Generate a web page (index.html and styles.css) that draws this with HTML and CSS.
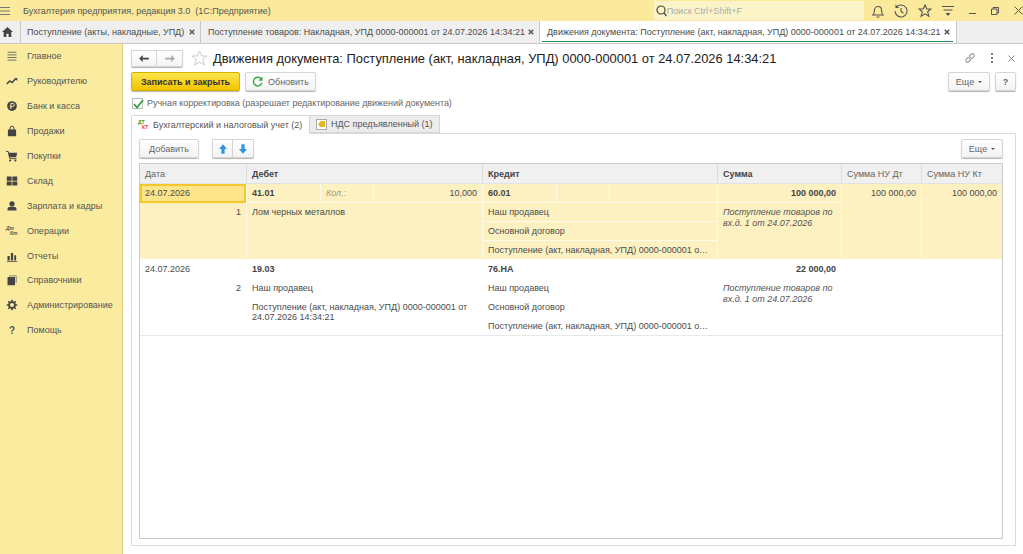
FILE: index.html
```html
<!DOCTYPE html>
<html lang="ru">
<head>
  <meta charset="UTF-8">
  <title>Движения документа</title>
  <link rel="stylesheet" href="styles.css">
</head>
<body>
  <header class="topbar">
    <svg class="burger" width="10" height="8" viewBox="0 0 10 8"><path d="M0 .5h10M0 4h10M0 7.500h10" stroke="#777" fill="none"/></svg>
    <div class="app-title">Бухгалтерия предприятия, редакция 3.0&nbsp; (1С:Предприятие)</div>
    <div class="search">
      <svg width="11" height="12" viewBox="0 0 11 12"><circle cx="5" cy="5" r="4" fill="none" stroke="#444" stroke-width="1.2"/><path d="M8 8l2.5 3" stroke="#444" stroke-width="1.2"/></svg>
      <span>Поиск Ctrl+Shift+F</span>
    </div>
    <div class="top-icons">
      <svg width="14" height="14" viewBox="0 0 14 14"><path d="M2 11c1-1 1.500-2 1.500-5a3.500 3.500 0 0 1 7 0c0 3 .5 4 1.500 5zM5.500 13h3" fill="none" stroke="#555" stroke-width="1.100"/></svg>
      <svg width="14" height="14" viewBox="0 0 14 14"><path d="M2.500 3A6 6 0 1 1 1 7M2 .8V3.500h2.700M7 4v3.500l2.500 1.500" fill="none" stroke="#555" stroke-width="1.100"/></svg>
      <svg width="14" height="14" viewBox="0 0 14 14"><path d="M7 1l1.800 4h4.200l-3.300 2.800 1.200 4.400L7 9.800l-3.900 2.400 1.200-4.400L1 5h4.200z" fill="none" stroke="#555" stroke-width="1.100"/></svg>
      <svg width="14" height="14" viewBox="0 0 14 14"><path d="M1 2.500h12M2.500 6h9" fill="none" stroke="#555"/><path d="M4.500 9h5L7 12z" fill="#555"/></svg>
    </div>
    <div class="win-btns">
      <span class="win-min"></span>
      <svg width="8" height="8" viewBox="0 0 8 8"><path d="M2 2V.5h5.500V6H6M.5 2H6v5.500H.5z" fill="none" stroke="#555"/></svg>
      <svg width="9" height="9" viewBox="0 0 9 9"><path d="M.5.5l8 8M8.500.5l-8 8" stroke="#555"/></svg>
    </div>
  </header>

  <nav class="tabbar">
    <div class="home">
      <svg width="11" height="10" viewBox="0 0 12 11"><path d="M6 0L0 5.500h1.800V11h3V7.500h2.400V11h3V5.500H12z" fill="#444"/></svg>
    </div>
    <div class="doc-tab tab-one"><span>Поступление (акты, накладные, УПД)</span><svg class="tab-x" width="6" height="6" viewBox="0 0 6 6"><path d="M.7.700l4.600 4.600M5.300.700L.7 5.300" stroke="#555" stroke-width="1.400"/></svg></div>
    <div class="doc-tab tab-two"><span>Поступление товаров: Накладная, УПД 0000-000001 от 24.07.2026 14:34:21</span><svg class="tab-x" width="6" height="6" viewBox="0 0 6 6"><path d="M.7.700l4.600 4.600M5.300.700L.7 5.300" stroke="#555" stroke-width="1.400"/></svg></div>
    <div class="doc-tab tab-three active"><span>Движения документа: Поступление (акт, накладная, УПД) 0000-000001 от 24.07.2026 14:34:21</span><svg class="tab-x" width="6" height="6" viewBox="0 0 6 6"><path d="M.7.700l4.600 4.600M5.300.700L.7 5.300" stroke="#555" stroke-width="1.400"/></svg></div>
  </nav>

  <div class="main">
    <aside class="sidebar">
      <div class="side-item"><svg viewBox="0 0 16 16"><path d="M2 3h12M2 6.500h12M2 10h12M2 13.500h12" stroke="#666" stroke-width="1.200"/></svg><span>Главное</span></div>
      <div class="side-item"><svg viewBox="0 0 16 16"><path d="M1 12l4-4 3 2 5-5" fill="none" stroke="#444" stroke-width="2"/><path d="M11 4h4v4z" fill="#444"/></svg><span>Руководителю</span></div>
      <div class="side-item"><svg viewBox="0 0 16 16"><circle cx="8" cy="8" r="6.500" fill="#444"/><path d="M6.500 12V4.500h2.500a2 2 0 0 1 0 4H5" fill="none" stroke="#fbeb9e" stroke-width="1.300"/></svg><span>Банк и касса</span></div>
      <div class="side-item"><svg viewBox="0 0 16 16"><path d="M2.500 6h11v9h-11z" fill="#444"/><path d="M5.500 7V4a2.500 2.500 0 0 1 5 0v3" fill="none" stroke="#444" stroke-width="1.300"/></svg><span>Продажи</span></div>
      <div class="side-item"><svg viewBox="0 0 16 16"><path d="M3 3.500h12l-1.500 6h-9z" fill="#444"/><path d="M0 2h3l2 9.500h9" fill="none" stroke="#444" stroke-width="1.200"/><circle cx="5.500" cy="14" r="1.400" fill="#444"/><circle cx="12.500" cy="14" r="1.400" fill="#444"/></svg><span>Покупки</span></div>
      <div class="side-item"><svg viewBox="0 0 16 16"><path d="M1 2h6.500v5.500H1zM8.500 2H15v5.500H8.500zM1 8.500h6.500V14H1zM8.500 8.500H15V14H8.500z" fill="#444"/></svg><span>Склад</span></div>
      <div class="side-item"><svg viewBox="0 0 16 16"><circle cx="8" cy="5" r="3.500" fill="#444"/><path d="M2 14v-2c0-2 2-3 3.500-3h5C12 9 14 10 14 12v2z" fill="#444"/></svg><span>Зарплата и кадры</span></div>
      <div class="side-item"><span class="dtkt">Дт<br><i>Кт</i></span><span>Операции</span></div>
      <div class="side-item"><svg viewBox="0 0 16 16"><path d="M2 8h3v6H2zM6.500 4h3v10h-3zM11 7h2.500v7H11zM1 14.500h14v1H1z" fill="#444"/></svg><span>Отчеты</span></div>
      <div class="side-item"><svg viewBox="0 0 16 16"><path d="M4 2h10v10h-1V3H4z" fill="#666"/><path d="M2 4h10v11H2z" fill="#444"/></svg><span>Справочники</span></div>
      <div class="side-item"><svg viewBox="0 0 16 16"><circle cx="8" cy="8" r="4" fill="none" stroke="#444" stroke-width="2.400"/><path d="M8 1v3M8 12v3M1 8h3M12 8h3M3 3l2 2M11 11l2 2M13 3l-2 2M5 11l-2 2" stroke="#444" stroke-width="2"/></svg><span>Администрирование</span></div>
      <div class="side-item"><span class="help-mark">?</span><span>Помощь</span></div>
    </aside>

    <main class="content">
      <div class="title-row">
        <div class="nav-btns">
          <button class="nav-btn"><svg width="10" height="7" viewBox="0 0 11 8"><path d="M0 4l4-4v3h7v2H4v3z" fill="#444"/></svg></button>
          <button class="nav-btn"><svg width="10" height="7" viewBox="0 0 11 8"><path d="M11 4L7 0v3H0v2h7v3z" fill="#aaa"/></svg></button>
        </div>
        <svg class="fav" width="17" height="16" viewBox="0 0 17 16"><path d="M8.500 1l2.200 5h5.300l-4.200 3.500 1.500 5.500-4.800-3-4.800 3 1.500-5.500L1 6h5.300z" fill="none" stroke="#ccc"/></svg>
        <h1>Движения документа: Поступление (акт, накладная, УПД) 0000-000001 от 24.07.2026 14:34:21</h1>
        <div class="title-tools">
          <svg width="12" height="12" viewBox="0 0 12 12"><path d="M5 7l2-2M4.500 5L2 7.500a1.800 1.800 0 0 0 2.500 2.500L7 7.500M5 4.500L7.500 2A1.800 1.800 0 0 1 10 4.500L7.500 7" fill="none" stroke="#999" stroke-width="1.100"/></svg>
          <svg width="4" height="10" viewBox="0 0 4 10"><path d="M1 0h2v2H1zM1 4h2v2H1zM1 8h2v2H1z" fill="#777"/></svg>
          <svg width="7" height="7" viewBox="0 0 7 7"><path d="M.5.500l6 6M6.500.500l-6 6" stroke="#888"/></svg>
        </div>
      </div>

      <div class="command-row">
        <button class="btn btn-primary">Записать и закрыть</button>
        <button class="btn btn-refresh"><svg width="11" height="11" viewBox="0 0 11 11"><path d="M9.500 3.500A4.300 4.300 0 1 0 9.800 7" fill="none" stroke="#3fa648" stroke-width="1.500"/><path d="M10.500 .5v4.200H6.300z" fill="#3fa648"/></svg>Обновить</button>
        <div class="spacer"></div>
        <button class="btn btn-more">Еще<i class="caret"></i></button>
        <button class="btn btn-help">?</button>
      </div>

      <label class="check-row">
        <span class="check-box"><svg width="11" height="10" viewBox="0 0 11 10"><path d="M1 5l3 3.500L10 1" fill="none" stroke="#2c9a3c" stroke-width="1.600"/></svg></span>
        Ручная корректировка (разрешает редактирование движений документа)
      </label>

      <div class="form-tabs">
        <div class="form-tab active"><span class="dtkt-color"><b>ДТ</b><b class="red">КТ</b></span>Бухгалтерский и налоговый учет (2)</div>
        <div class="form-tab"><span class="vat-icon"><svg width="7" height="6" viewBox="0 0 7 6"><path d="M0 3l3-3h4v6H2z" fill="#e3b81f"/></svg></span>НДС предъявленный (1)</div>
      </div>

      <section class="panel">
        <div class="panel-tools">
          <button class="btn btn-add">Добавить</button>
          <div class="arrows">
            <button class="nav-btn arrow-btn"><svg width="8" height="10" viewBox="0 0 10 12"><path d="M5 0l5 6H7v6H3V6H0z" fill="#2e96dd"/></svg></button>
            <button class="nav-btn arrow-btn"><svg width="8" height="10" viewBox="0 0 10 12"><path d="M5 12L0 6h3V0h4v6h3z" fill="#2e96dd"/></svg></button>
          </div>
          <div class="spacer"></div>
          <button class="btn btn-more">Еще<i class="caret"></i></button>
        </div>

        <div class="grid">
          <div class="cols head">
            <div class="hcell">Дата</div>
            <div class="hcell strong">Дебет</div>
            <div class="hcell strong">Кредит</div>
            <div class="hcell strong">Сумма</div>
            <div class="hcell">Сумма НУ Дт</div>
            <div class="hcell">Сумма НУ Кт</div>
          </div>

          <div class="cols entry selected">
            <div class="col">
              <div class="line cur-date">24.07.2026</div>
              <div class="line num">1</div>
            </div>
            <div class="col">
              <div class="line split">
                <span class="s-acc strong">41.01</span><span class="s-label">Кол.:</span><span class="s-val">10,000</span>
              </div>
              <div class="line">Лом черных металлов</div>
            </div>
            <div class="col">
              <div class="line split">
                <span class="s-acc strong">60.01</span><span class="s-label"></span><span class="s-val"></span>
              </div>
              <div class="line ruled">Наш продавец</div>
              <div class="line ruled">Основной договор</div>
              <div class="line ellipsis">Поступление (акт, накладная, УПД) 0000-000001 от 24.07.2026 14:34:21</div>
            </div>
            <div class="col">
              <div class="line right strong ruled">100 000,00</div>
              <div class="note">Поступление товаров по вх.д. 1 от 24.07.2026</div>
            </div>
            <div class="col"><div class="line right">100 000,00</div></div>
            <div class="col"><div class="line right">100 000,00</div></div>
          </div>

          <div class="cols entry">
            <div class="col">
              <div class="line">24.07.2026</div>
              <div class="line num">2</div>
            </div>
            <div class="col">
              <div class="line strong">19.03</div>
              <div class="line">Наш продавец</div>
              <div class="wrap">Поступление (акт, накладная, УПД) 0000-000001 от 24.07.2026 14:34:21</div>
            </div>
            <div class="col">
              <div class="line strong">76.НА</div>
              <div class="line">Наш продавец</div>
              <div class="line">Основной договор</div>
              <div class="line ellipsis">Поступление (акт, накладная, УПД) 0000-000001 от 24.07.2026 14:34:21</div>
            </div>
            <div class="col">
              <div class="line right strong">22 000,00</div>
              <div class="note">Поступление товаров по вх.д. 1 от 24.07.2026</div>
            </div>
            <div class="col"></div>
            <div class="col"></div>
          </div>
        </div>
      </section>
    </main>
  </div>
</body>
</html>
```

FILE: styles.css
```css
* {
  box-sizing: border-box;
}
html, body {
  height: 100%;
}
body {
  margin: 0;
  display: flex;
  flex-direction: column;
  overflow: hidden;
  font-family: "Liberation Sans", Arial, sans-serif;
  font-size: 9px;
  color: #4b4b4b;
  background: #fff;
}
button {
  font: inherit;
  color: inherit;
}
svg {
  display: block;
  flex: none;
}

/* top bar */
.topbar {
  height: 21px;
  flex: none;
  display: flex;
  align-items: center;
  background: #fbe99c;
}
.burger {
  margin-right: 13px;
}
.app-title {
  width: 631px;
  color: #555;
}
.search {
  width: 210px;
  height: 19px;
  display: flex;
  align-items: center;
  padding-left: 2px;
  background: #fdf3c8;
  color: #aaa;
}
.top-icons {
  display: flex;
  gap: 9.5px;
  margin-left: 7px;
}
.win-btns {
  display: flex;
  align-items: center;
  gap: 15px;
  margin-left: 14px;
}
.win-min {
  width: 7px;
  height: 1px;
  margin-top: 6px;
  background: #555;
}

/* open windows */
.tabbar {
  height: 23px;
  flex: none;
  display: flex;
  background: #efefef;
  border-bottom: 1px solid #c9c9c9;
}
.home {
  width: 21px;
  display: flex;
  align-items: center;
  padding-left: 2px;
  border-right: 1px solid #c9c9c9;
}
.doc-tab {
  position: relative;
  display: flex;
  align-items: center;
  justify-content: space-between;
  padding: 0 5px 0 7px;
  border-right: 1px solid #c9c9c9;
  white-space: nowrap;
}
.tab-one {
  width: 180px;
  padding-left: 6px;
}
.tab-two {
  width: 339px;
}
.tab-three {
  width: 417px;
  padding-right: 6px;
}
.doc-tab.active {
  background: #fff;
}
.doc-tab.active::after {
  content: "";
  position: absolute;
  left: 2px;
  right: 3px;
  bottom: 1px;
  height: 1px;
  background: #1f9456;
}

/* sections */
.main {
  flex: 1;
  display: flex;
  min-height: 0;
}
.sidebar {
  width: 123px;
  flex: none;
  background: #fbeb9e;
  border-right: 1px solid #d9ca86;
}
.side-item {
  height: 24.9px;
  display: flex;
  align-items: center;
  gap: 9px;
  padding-left: 6px;
  color: #555;
}
.side-item svg {
  width: 12px;
  height: 12px;
}
.dtkt {
  width: 12px;
  font-size: 5px;
  line-height: 5px;
  font-style: italic;
  font-weight: bold;
}
.dtkt i {
  margin-left: 4px;
}
.help-mark {
  width: 12px;
  text-align: center;
  font-weight: bold;
  font-size: 10px;
}

/* form */
.content {
  flex: 1;
  min-width: 0;
  display: flex;
  flex-direction: column;
  padding: 5px 7px 8px 8px;
}
.title-row {
  height: 18px;
  display: flex;
  align-items: center;
}
.nav-btns, .arrows {
  display: flex;
  border-radius: 2px;
  box-shadow: 0 1px 1px rgba(0, 0, 0, 0.3);
}
.nav-btn {
  width: 26px;
  height: 17px;
  padding: 0;
  display: flex;
  align-items: center;
  justify-content: center;
  background: linear-gradient(#fff, #f3f3f3);
  border: 1px solid #d5d5d5;
}
.nav-btn + .nav-btn {
  border-left: 0;
}
.fav {
  margin-left: 8px;
  margin-right: 5px;
}
h1 {
  margin: 0;
  font-size: 12.9px;
  font-weight: normal;
  color: #222;
  white-space: nowrap;
}
.title-tools {
  margin-left: auto;
  display: flex;
  align-items: center;
  gap: 14px;
  padding-right: 1px;
}
.command-row {
  margin-top: 5px;
  display: flex;
  gap: 5px;
}
.spacer {
  flex: 1;
}
.btn {
  height: 19px;
  padding: 0;
  display: flex;
  align-items: center;
  justify-content: center;
  background: linear-gradient(#fff, #f3f3f3);
  border: 1px solid #d5d5d5;
  border-radius: 2px;
  box-shadow: 0 1px 1px rgba(0, 0, 0, 0.3);
  color: #666;
}
.btn-primary {
  width: 109px;
  background: linear-gradient(#fce64c, #f3c300);
  border-color: #d8b000;
  color: #333;
  font-weight: bold;
}
.btn-refresh {
  width: 71px;
  gap: 5px;
}
.btn-more {
  width: 42px;
  gap: 4px;
}
.btn-help {
  width: 21px;
  font-weight: bold;
}
.caret {
  border: 2px solid transparent;
  border-top: 2px solid #555;
  margin-top: 2px;
}
.check-row {
  margin-top: 4px;
  height: 16px;
  display: flex;
  align-items: center;
  gap: 4px;
  color: #666;
  letter-spacing: -0.045px;
}
.check-box {
  width: 11px;
  height: 11px;
  border: 1px solid #bbb;
  background: #fff;
  margin-left: 1px;
}
.form-tabs {
  margin-top: 4px;
  height: 19px;
  display: flex;
  position: relative;
  z-index: 1;
  white-space: nowrap;
}
.form-tab {
  height: 18px;
  display: flex;
  align-items: center;
  gap: 4px;
  padding: 0 6px;
  background: #ececec;
  border: 1px solid #d5d5d5;
  border-left: 0;
  color: #555;
}
.form-tab.active {
  height: 19px;
  width: 179px;
  background: #fff;
  border-left: 1px solid #d5d5d5;
  border-bottom: 0;
  border-radius: 2px 2px 0 0;
}
.dtkt-color {
  width: 11px;
  height: 11px;
  flex: none;
  display: flex;
  flex-direction: column;
  font-size: 5px;
  line-height: 5px;
  color: #2c9a3c;
}
.red {
  color: #e23a3a;
  margin-left: 4px;
}
.vat-icon {
  width: 11px;
  height: 11px;
  flex: none;
  display: flex;
  align-items: center;
  justify-content: center;
  border: 1px solid #aaa;
  background: #fff;
}
.panel {
  flex: 1;
  margin-top: -1px;
  display: flex;
  flex-direction: column;
  padding: 5px 12px 6px 7px;
  border: 1px solid #dcdcdc;
  min-height: 0;
}
.panel-tools {
  display: flex;
  gap: 13px;
}
.btn-add {
  width: 60px;
}
.arrows .arrow-btn {
  width: 21px;
  height: 19px;
}

/* table */
.grid {
  flex: 1;
  margin-top: 5px;
  border: 1px solid #c9c9c9;
}
.cols {
  display: grid;
  grid-template-columns: 107px 236px 235px 124px 80px 1fr;
}
.head {
  height: 20px;
  background: #f0f0f0;
  border-bottom: 1px solid #e2e2e2;
}
.hcell {
  display: flex;
  align-items: center;
  padding-left: 5px;
  border-right: 1px solid #dcdcdc;
  color: #666;
}
.hcell:last-child {
  border-right: 0;
}
.strong {
  font-weight: bold;
  color: #444;
}
.entry {
  height: 76px;
  border-bottom: 1px solid #e8e8e8;
}
.col {
  min-width: 0;
  border-right: 1px solid transparent;
}
.selected {
  background: #fdf1c2;
  border-bottom: 1px solid #fff;
}
.selected .col {
  border-right-color: #fffbe9;
}
.col:last-child {
  border-right: 0;
}
.line {
  height: 19px;
  padding: 0 5px;
  line-height: 18px;
  white-space: nowrap;
}
.ruled {
  border-bottom: 1px solid #fffbe9;
}
.split {
  display: flex;
  padding: 0;
  border-bottom: 1px solid #fffbe9;
}
.s-acc {
  width: 74px;
  padding-left: 5px;
  border-right: 1px solid #fffbe9;
}
.s-label {
  width: 53px;
  padding-left: 5px;
  border-right: 1px solid #fffbe9;
  font-style: italic;
  color: #a09a80;
}
.s-val {
  flex: 1;
  text-align: right;
  padding-right: 5px;
}
.cur-date {
  background: #fde58a;
  border: 2px solid #f5c72f;
  padding-left: 3px;
  line-height: 15px;
}
.num {
  text-align: right;
}
.right {
  text-align: right;
}
.ellipsis {
  overflow: hidden;
  text-overflow: ellipsis;
}
.wrap {
  padding: 4px 5px 0;
  line-height: 10px;
}
.note {
  padding: 4px 5px 0;
  line-height: 11px;
  font-style: italic;
  color: #555;
}
```
